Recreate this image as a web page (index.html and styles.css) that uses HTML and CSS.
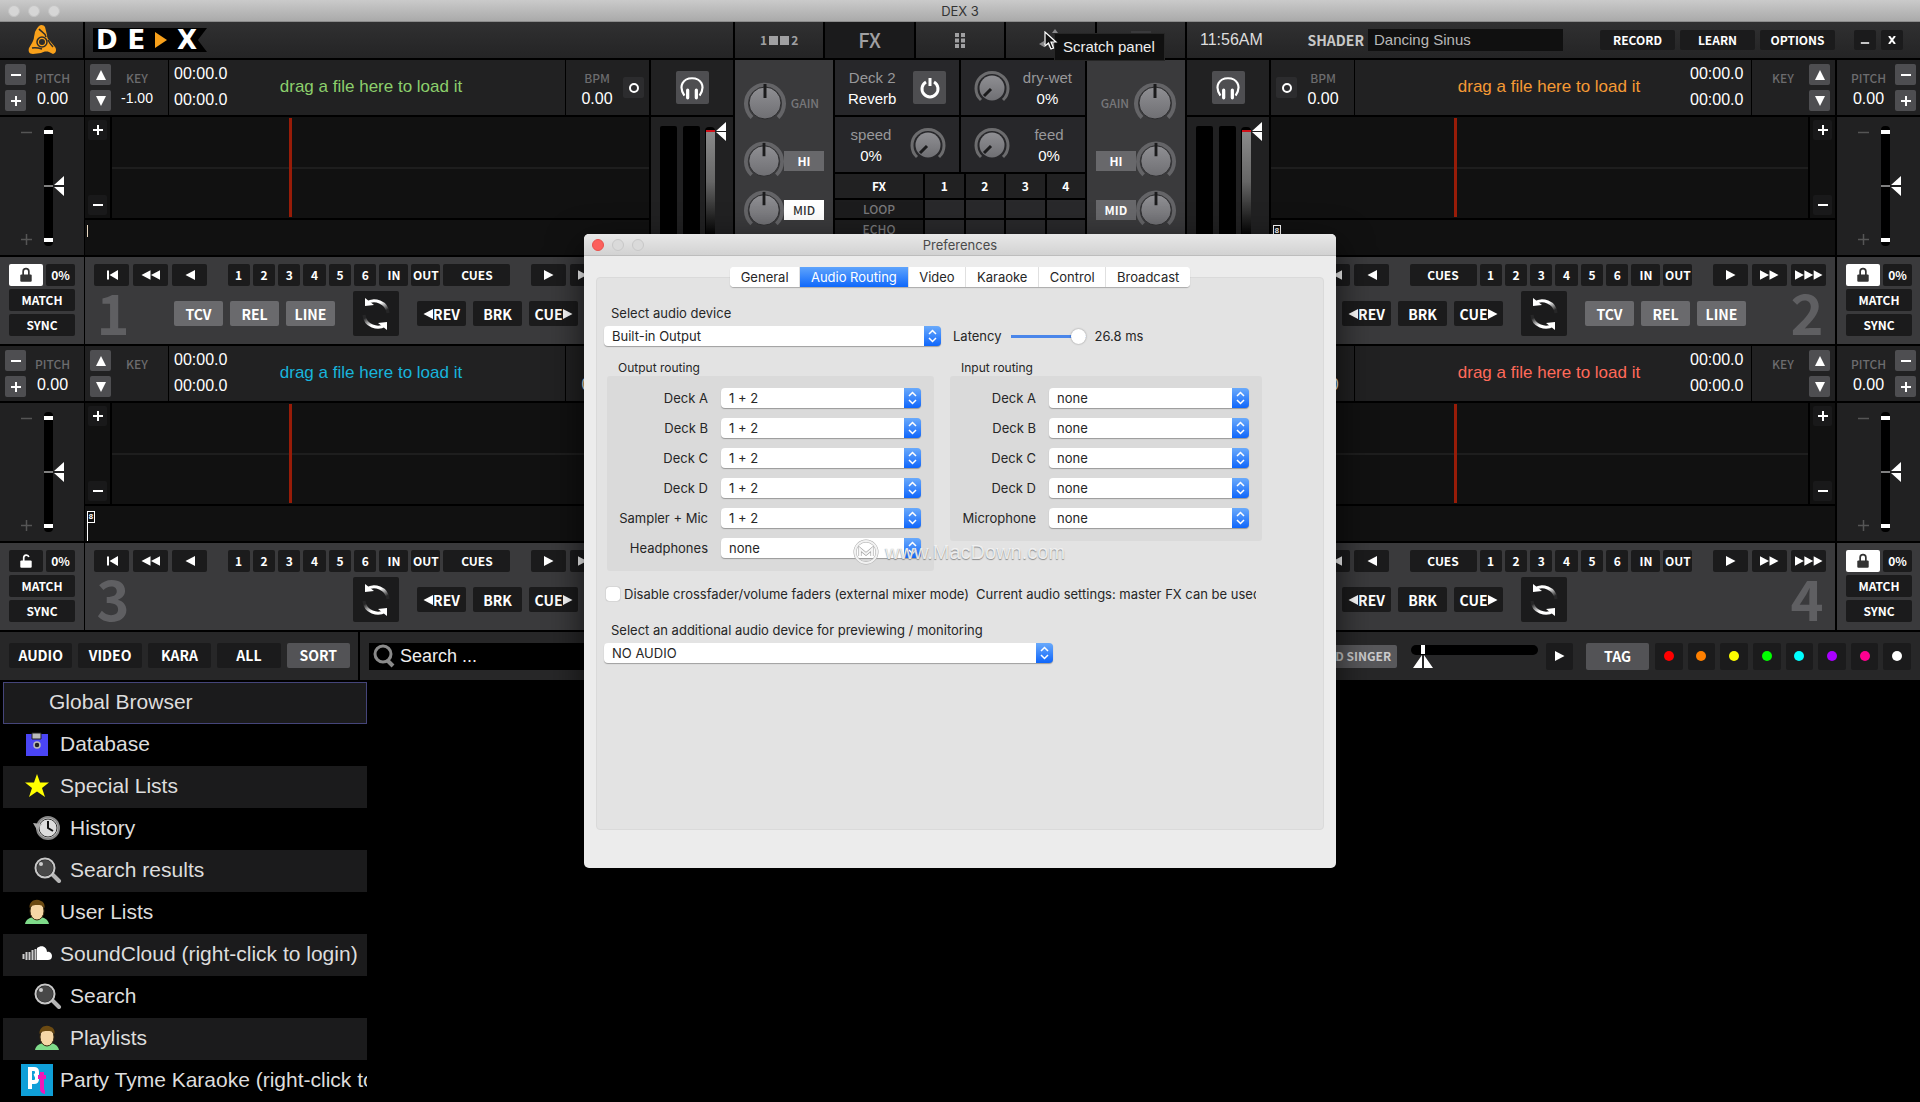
FILE: index.html
```html
<!DOCTYPE html>
<html lang="en">
<head>
<meta charset="utf-8">
<title>DEX 3</title>
<link rel="stylesheet" href="styles.css">
</head>
<body>
<svg class="defs" aria-hidden="true">
  <defs>
    <linearGradient id="metal" x1="0" y1="0" x2="0" y2="1"><stop offset="0" stop-color="#8f8f93"/><stop offset="1" stop-color="#6f6f73"/></linearGradient>
    <linearGradient id="fadeA" x1="0" y1="0" x2="1" y2="1"><stop offset="0" stop-color="#fff"/><stop offset=".4" stop-color="#fff"/><stop offset=".85" stop-color="#fff" stop-opacity=".05"/></linearGradient>
    <linearGradient id="fadeB" x1="1" y1="1" x2="0" y2="0"><stop offset="0" stop-color="#fff"/><stop offset=".4" stop-color="#fff"/><stop offset=".85" stop-color="#fff" stop-opacity=".05"/></linearGradient>
    <linearGradient id="volume" x1="0" y1="0" x2="0" y2="1"><stop offset="0" stop-color="#8a8a8a"/><stop offset=".45" stop-color="#666"/><stop offset=".95" stop-color="#000"/></linearGradient>
  </defs>
  <symbol id="minus" viewBox="0 0 12 12"><path d="M1 6h10" stroke="currentColor" stroke-width="2"/></symbol>
  <symbol id="plus" viewBox="0 0 12 12"><path d="M1 6h10M6 1v10" stroke="currentColor" stroke-width="2"/></symbol>
  <symbol id="up" viewBox="0 0 12 12"><path d="M6 1l5 10H1z" fill="currentColor"/></symbol>
  <symbol id="down" viewBox="0 0 12 12"><path d="M6 11l5-10H1z" fill="currentColor"/></symbol>
  <symbol id="prev" viewBox="0 0 12 12"><path d="M1 1.500h2v9H1zM12 1v10L3.500 6z" fill="currentColor"/></symbol>
  <symbol id="back" viewBox="0 0 10 12"><path d="M10 1v10L.5 6z" fill="currentColor"/></symbol>
  <symbol id="rew" viewBox="0 0 20 12"><path d="M10 1v10L.5 6zM20 1v10L10.500 6z" fill="currentColor"/></symbol>
  <symbol id="play" viewBox="0 0 10 12"><path d="M0 1v10l9.500-5z" fill="currentColor"/></symbol>
  <symbol id="fwd" viewBox="0 0 20 12"><path d="M0 1v10l9.500-5zM10 1v10l9.500-5z" fill="currentColor"/></symbol>
  <symbol id="fast" viewBox="0 0 30 12"><path d="M0 1v10l9.500-5zM10 1v10l9.500-5zM20 1v10l9.500-5z" fill="currentColor"/></symbol>
  <symbol id="locked" viewBox="0 0 12 14"><path d="M3.500 7V4a2.500 2.500 0 015 0v3" fill="none" stroke="currentColor" stroke-width="1.500"/><rect x="1" y="6.500" width="10" height="6.500" rx="1" fill="currentColor"/></symbol>
  <symbol id="unlocked" viewBox="0 0 12 14"><path d="M4 7V4a2.300 2.300 0 014.500-.5" fill="none" stroke="currentColor" stroke-width="1.500"/><rect x="1" y="6.500" width="10" height="6.500" rx="1" fill="currentColor"/></symbol>
  <symbol id="loop" viewBox="0 0 36 36"><path d="M9 7C16 2 29 6 30 17" fill="none" stroke="url(#fadeA)" stroke-width="3"/><path d="M7 2v8l9-1z" fill="#fff"/><path d="M27 29C20 34 7 30 6 19" fill="none" stroke="url(#fadeB)" stroke-width="3"/><path d="M29 34v-8l-9 1z" fill="#fff"/></symbol>
  <symbol id="phones" viewBox="0 0 24 24"><path d="M5 19C-1 10 4 3 12 3s13 7 7 16" fill="none" stroke="#fff" stroke-width="2"/><path d="M8 14v7M16 14v7" stroke="#fff" stroke-width="3" stroke-linecap="round"/></symbol>
  <symbol id="knob" viewBox="0 0 42 42"><path d="M8 35.500A19 19 0 1134 35.500" fill="none" stroke="#646467" stroke-width="4"/><circle cx="21" cy="21" r="16" fill="url(#metal)" stroke="#2c2c2e" stroke-width="1"/><path d="M21 2v14" stroke="#1b1b1c" stroke-width="3"/></symbol>
  <symbol id="dial" viewBox="0 0 36 36"><path d="M7 30A16 16 0 1129 30" fill="none" stroke="#6c6c6e" stroke-width="3"/><circle cx="18" cy="18" r="12.500" fill="url(#metal)"/><path d="M17 19l-7 7" stroke="#1b1b1c" stroke-width="3"/></symbol>
  <symbol id="pitch" viewBox="0 0 83 138"><rect x="44" y="9" width="9" height="120" rx="4" fill="#000"/><path d="M44 13h9v4h-9zM44 121h9v4h-9z" fill="#fff"/><path d="M44 69h9" stroke="#fff"/><path d="M64 59v9H54zM64 70v9l-10-9z" fill="#fff"/><path d="M21 15.500h11M21 122.500h11M26.500 117v11" stroke="#555" stroke-width="1.500"/></symbol>
  <symbol id="magnifier" viewBox="0 0 28 26"><path d="M18 16l8 8" stroke="#b5b5b5" stroke-width="4" stroke-linecap="round"/><circle cx="12" cy="11" r="9.500" fill="#222" stroke="#c8c8c8" stroke-width="2"/><circle cx="12" cy="11" r="8" fill="#484848"/><circle cx="8" cy="7" r="2" fill="#ccc"/></symbol>
  <symbol id="person" viewBox="0 0 26 26"><path d="M1 25c1-5 5-6 8-7h8c3 1 7 2 8 7z" fill="#7fdb8a"/><ellipse cx="13" cy="12" rx="7" ry="9" fill="#f6d7a6" stroke="#3a2a10" stroke-width="1"/><path d="M5.500 9C5 2 12-1 17 2c3 1 4 4 3.500 7-2-3-4-3-7-3-3 0-6 0-8 3z" fill="#6b4a12"/></symbol>
</svg>

<div class="window">
  <header class="titlebar"><span class="lights"><i></i><i></i><i></i></span><h1>DEX 3</h1></header>

  <div class="toolbar">
    <div class="brand">
      <div class="emblem">
        <svg width="32" height="32" viewBox="0 0 32 32" role="img" aria-label="PCDJ"><path d="M13 2c2-2 5-1 6 1l2 8c0 3 1 4 3 6l5 6c2 3 1 6-2 7l-4-2c-3-1-6 0-8 1l-8 1c-4 0-5-3-4-6l3-5c1-2 2-4 2-6l1-5c1-2 2-4 4-6z" fill="#f9a11b"/><circle cx="16" cy="18" r="5" fill="none" stroke="#2b2b2c" stroke-width="1.500"/><circle cx="16" cy="18" r="3" fill="#2b2b2c"/><path d="M13 5c2 3 6 3 7 8M6 24c4-1 7 0 10 1M27 23c-2-2-3-3-5-7" fill="none" stroke="#2b2b2c" stroke-width="1.500"/></svg>
      </div>
      <div class="wordmark"><span class="plate"><b>D</b><b>E</b><svg width="12" height="16" viewBox="0 0 12 16" aria-hidden="true"><path d="M0 0v16l12-8z" fill="#f9a11b"/></svg><b>X</b></span></div>
    </div>
    <nav class="panels">
      <button class="mix" aria-label="Mixer panel">1<i></i><i></i>2</button>
      <button class="on">FX</button>
      <button aria-label="Sampler panel"><svg width="10" height="15" viewBox="0 0 10 15"><path d="M0 0h4v4H0zM6 0h4v4H6zM0 5.500h4v4H0zM6 5.500h4v4H6zM0 11h4v4H0zM6 11h4v4H6z" fill="#a0a0a2"/></svg></button>
      <button class="scratch" aria-label="Scratch panel"><svg width="22" height="22" viewBox="0 0 22 22"><path d="M4 15h7M16 2v8" stroke="#8a8a8c" stroke-width="2"/><path d="M0 15l5-3v6zM16 0l3 4h-6z" fill="#8a8a8c"/><circle cx="14" cy="15" r="5" fill="#8a8a8c"/></svg></button>
      <button aria-label="Video panel"><svg width="20" height="18" viewBox="0 0 20 18"><path d="M0 0h20v18H0z" fill="#3a3a3c"/></svg></button>
      <svg class="cursor" width="14" height="20" viewBox="0 0 14 20" aria-hidden="true"><path d="M1 1v14l3.500-3 2.500 6 2.500-1L7 11h5z" fill="#111" stroke="#fff" stroke-width="1.200"/></svg>
      <span class="tooltip" role="tooltip">Scratch panel</span>
    </nav>
    <div class="tools">
      <time>11:56AM</time>
      <label class="shader">SHADER<input type="text" value="Dancing Sinus"></label>
      <div class="menu"><button>RECORD</button><button>LEARN</button><button>OPTIONS</button></div>
      <button class="small" aria-label="Minimize"><svg width="10" height="12"><use href="#minus" y="3"/></svg></button>
      <button class="small" aria-label="Close"><svg width="8" height="8" viewBox="0 0 8 8"><path d="M1 0l6 8M7 0L1 8" stroke="#fff" stroke-width="2"/></svg></button>
    </div>
  </div>

  <main class="console">
    <div class="stack" id="left"></div>
    <section class="meter" aria-label="Left volume"></section>
    <section class="mixer">
      <div class="eq">
        <div class="band gain"><svg width="42" height="42"><use href="#knob"/></svg><span>GAIN</span></div>
        <div class="band"><svg width="40" height="40"><use href="#knob"/></svg><button>HI</button></div>
        <div class="band"><svg width="40" height="40"><use href="#knob"/></svg><button class="lit">MID</button></div>
      </div>
      <div class="fx">
        <div class="units">
          <div class="unit"><p><span>Deck 2</span>Reverb</p><button class="power" aria-label="Effect on"><svg width="22" height="24" viewBox="0 0 22 24"><path d="M7 6a8 8 0 108 0" fill="none" stroke="#fff" stroke-width="3"/><path d="M11 2v8" stroke="#fff" stroke-width="3"/></svg></button></div>
          <div class="unit"><svg width="36" height="36"><use href="#dial"/></svg><p><span>dry-wet</span>0%</p></div>
          <div class="unit"><p><span>speed</span>0%</p><svg width="36" height="36"><use href="#dial"/></svg></div>
          <div class="unit"><svg width="36" height="36"><use href="#dial"/></svg><p><span>feed</span>0%</p></div>
        </div>
        <table class="slots">
          <thead><tr><th>FX</th><th>1</th><th>2</th><th>3</th><th>4</th></tr></thead>
          <tbody>
            <tr><th>LOOP</th><td></td><td></td><td></td><td></td></tr>
            <tr><th>ECHO</th><td></td><td></td><td></td><td></td></tr>
          </tbody>
        </table>
      </div>
      <div class="eq flip">
        <div class="band gain"><svg width="42" height="42"><use href="#knob"/></svg><span>GAIN</span></div>
        <div class="band"><svg width="40" height="40"><use href="#knob"/></svg><button>HI</button></div>
        <div class="band"><svg width="40" height="40"><use href="#knob"/></svg><button>MID</button></div>
      </div>
    </section>
    <section class="meter" aria-label="Right volume"></section>
    <div class="stack" id="right"></div>
  </main>

  <div class="bar">
    <div class="filters"><button>AUDIO</button><button>VIDEO</button><button>KARA</button><button>ALL</button><button class="on">SORT</button></div>
    <div class="finder">
      <label class="search"><svg width="22" height="24" viewBox="0 0 22 24"><circle cx="10" cy="10" r="8" fill="none" stroke="#8a8a8a" stroke-width="3"/><path d="M14 16l6 6" stroke="#8a8a8a" stroke-width="4"/></svg><input type="search" placeholder="Search ..." aria-label="Search"></label>
      <button class="singer">ADD SINGER</button>
      <div class="preview"><svg width="127" height="24" viewBox="0 0 127 24"><rect y="1" width="127" height="10" rx="5" fill="#000"/><path d="M10 1h4v9h-4zM11 11v13H2zM13 11v13h9z" fill="#fff"/></svg><input type="range" value="8" aria-label="Preview position"></div>
      <button class="play" aria-label="Preview"><svg width="10" height="12"><use href="#play"/></svg></button>
      <button class="tag on">TAG</button>
      <div class="tags">
        <button aria-label="Red"><i class="red"></i></button><button aria-label="Orange"><i class="orange"></i></button><button aria-label="Yellow"><i class="yellow"></i></button><button aria-label="Green"><i class="green"></i></button><button aria-label="Cyan"><i class="cyan"></i></button><button aria-label="Violet"><i class="violet"></i></button><button aria-label="Pink"><i class="pink"></i></button><button aria-label="White"><i class="white"></i></button>
      </div>
    </div>
  </div>

  <nav class="tree">
    <a class="root" href="#browser">Global Browser</a>
    <a href="#database"><svg height="24" viewBox="0 0 24 24"><path d="M1 2h22v22H1z" fill="#4a45f5"/><path d="M7 1h9v6H7z" fill="#bbb" stroke="#222"/><circle cx="12" cy="13" r="3" fill="#222" stroke="#bbb" stroke-width="1.500"/></svg>Database</a>
    <a href="#special"><svg height="24" viewBox="0 0 24 24"><path d="M12 0l3 8.500h9l-7 5.500 3 9-8-5.500L4 23l3-9-7-5.500h9z" fill="#ff0"/></svg>Special Lists</a>
    <a class="child" href="#history"><svg height="26" viewBox="0 0 28 26"><circle cx="15" cy="13" r="11" fill="#ddd" stroke="#888" stroke-width="2"/><circle cx="15" cy="13" r="9" fill="none" stroke="#333"/><path d="M15 6v7l5 3" fill="none" stroke="#111" stroke-width="2"/><path d="M0 8l9 1-5 6z" fill="#aaa"/></svg>History</a>
    <a class="child" href="#results"><svg height="26"><use href="#magnifier"/></svg>Search results</a>
    <a href="#users"><svg height="26"><use href="#person"/></svg>User Lists</a>
    <a href="#soundcloud"><svg height="16" viewBox="0 0 30 16"><path d="M15 2c5-4 10-1 10 4 3-1 5 2 5 4 0 3-2 4-4 4H15z" fill="#fff"/><path d="M1.500 8v5M4.500 6v8M7.500 6v8M10.500 4v10M13.500 3v11" stroke="#ccc" stroke-width="2"/></svg>SoundCloud (right-click to login)</a>
    <a class="child" href="#search"><svg height="26"><use href="#magnifier"/></svg>Search</a>
    <a class="child" href="#playlists"><svg height="26"><use href="#person"/></svg>Playlists</a>
    <a href="#party"><svg height="32" viewBox="0 0 32 32"><path d="M0 0h32v32H0z" fill="#0f9fd8"/><path d="M9 25V5h4c2 0 3 1 3 3v2l-1 1 1 2v2c0 2-1 3-3 3h-2" fill="none" stroke="#fff" stroke-width="4"/><path d="M21 8v17a3 3 0 003 3M17 13h8" fill="none" stroke="#f018b8" stroke-width="4"/></svg>Party Tyme Karaoke (right-click to login)</a>
  </nav>

  <div class="dialog" role="dialog" aria-labelledby="prefs">
    <header><span class="lights"><i></i><i></i><i></i></span><h2 id="prefs">Preferences</h2></header>
    <div class="body">
      <div class="tabs" role="tablist"><button>General</button><button class="on">Audio Routing</button><button>Video</button><button>Karaoke</button><button>Control</button><button>Broadcast</button></div>
      <div class="pane">
        <label class="title" for="device">Select audio device</label>
        <div class="device">
          <select id="device"><option>Built-in Output</option></select>
          <label for="latency">Latency</label><input id="latency" type="range" value="100"><output for="latency">26.8 ms</output>
        </div>
        <div class="routing">
          <fieldset class="out"><legend>Output routing</legend>
            <div class="grid">
              <label for="oa">Deck A</label><select id="oa"><option>1 + 2</option></select>
              <label for="ob">Deck B</label><select id="ob"><option>1 + 2</option></select>
              <label for="oc">Deck C</label><select id="oc"><option>1 + 2</option></select>
              <label for="od">Deck D</label><select id="od"><option>1 + 2</option></select>
              <label for="os">Sampler + Mic</label><select id="os"><option>1 + 2</option></select>
              <label for="oh">Headphones</label><select id="oh"><option>none</option></select>
            </div>
          </fieldset>
          <fieldset class="in"><legend>Input routing</legend>
            <div class="grid">
              <label for="ia">Deck A</label><select id="ia"><option>none</option></select>
              <label for="ib">Deck B</label><select id="ib"><option>none</option></select>
              <label for="ic">Deck C</label><select id="ic"><option>none</option></select>
              <label for="id">Deck D</label><select id="id"><option>none</option></select>
              <label for="im">Microphone</label><select id="im"><option>none</option></select>
            </div>
          </fieldset>
        </div>
        <div class="external"><input id="ext" type="checkbox"><label for="ext">Disable crossfader/volume faders (external mixer mode)</label><p>Current audio settings: master FX can be used</p></div>
        <label class="title" for="extra">Select an additional audio device for previewing / monitoring</label>
        <select id="extra"><option>NO AUDIO</option></select>
      </div>
    </div>
    <div class="watermark"><svg width="26" height="26" viewBox="0 0 26 26" aria-hidden="true"><circle cx="13" cy="13" r="11" fill="none" stroke="#aaa" stroke-width="3"/><circle cx="13" cy="13" r="11" fill="none" stroke="#f2f2f2" stroke-width="2"/><path d="M7 17v-7l6 5 6-5v7" fill="none" stroke="#999" stroke-width="3"/><path d="M7 17v-7l6 5 6-5v7" fill="none" stroke="#f5f5f5" stroke-width="2"/></svg>www.MacDown.com</div>
  </div>
</div>
<script src="script.js"></script>
</body>
</html>
```

FILE: styles.css
```css
* { box-sizing: border-box; }
body { margin: 0; background: #000; color: #fff; font: 16px/20px "Liberation Sans", Arial, sans-serif; }
h1, h2, p { margin: 0; font-weight: 400; }
button, input, select { font: inherit; color: inherit; margin: 0; border: 0; padding: 0; outline: 0; }
svg { display: block; flex: none; }
.defs { position: absolute; width: 0; height: 0; }

button {
  display: flex; align-items: center; justify-content: center;
  background: #1b1b1c; border-radius: 2px; overflow: hidden; white-space: nowrap;
  font: 700 12px/20px "Noto Sans CJK JP", sans-serif;
}
button.on { background: #535356; }

.window { position: relative; min-height: 100vh; overflow: hidden; display: flex; flex-direction: column; }

.titlebar { position: relative; height: 22px; display: flex; align-items: center; justify-content: center; background: linear-gradient(#cacaca, #aaa); border-bottom: 1px solid #8c8c8c; }
.titlebar h1 { font: 13px/20px Inter, sans-serif; color: #333; }
.lights { position: absolute; left: 8px; display: flex; gap: 8px; }
.lights i { width: 12px; height: 12px; border-radius: 50%; background: #d6d6d6; border: 1px solid #c4c4c4; }

/* Toolbar */
.toolbar { display: grid; grid-template-columns: 1fr 450px 1fr; gap: 2px; height: 36px; margin-bottom: 2px; }
.toolbar .emblem, .toolbar .wordmark, .tools, .panels button { background: linear-gradient(#303031, #242425); }
.brand { display: grid; grid-template-columns: 83px 1fr; gap: 2px; }
.emblem { display: grid; place-items: center; }
.wordmark { display: flex; align-items: center; padding-left: 8px; }
.plate { display: flex; align-items: center; justify-content: space-between; width: 114px; height: 24px; padding: 0 10px 0 3px; background: #000; clip-path: polygon(0 0, 100% 0, 92% 50%, 100% 100%, 0 100%); }
.plate b { font: 700 26px/24px "DejaVu Sans", sans-serif; }
.panels { position: relative; display: grid; grid-template-columns: repeat(5, 1fr); gap: 2px; }
.panels button { border-radius: 0; color: #a0a0a2; gap: 2px; }
.panels button.on { background: #1b1b1c; font-weight: 500; font-size: 20px; }
.panels .mix i { width: 9px; height: 9px; background: #a0a0a2; }
.cursor { position: absolute; left: 309px; top: 9px; z-index: 3; }
.tooltip { position: absolute; left: 319px; top: 11px; z-index: 2; padding: 3px 9px 3px 8px; background: #101010; border: 1px solid #262626; font-size: 15px; color: #eee; white-space: nowrap; }
.tools { display: flex; align-items: center; padding: 0 17px 0 13px; }
.tools time { color: #ddd; flex: 1; }
.shader { display: flex; align-items: center; gap: 4px; color: #c8c8c8; font: 700 14px/22px "Noto Sans CJK JP", sans-serif; }
.shader input { width: 195px; height: 22px; padding-left: 6px; background: #101010; color: #b8b8b8; font: 15px/22px "Liberation Sans", sans-serif; }
.menu { display: grid; grid-template-columns: repeat(3, 75px); gap: 5px; margin: 0 19px 0 37px; }
.tools button { height: 20px; }
.tools .small { width: 22px; }
.tools .small:last-child { margin-left: 5px; }

/* Console */
.console { display: grid; grid-template-columns: 1fr 82px 450px 82px 1fr; gap: 2px; margin-bottom: 2px; }
.stack { display: grid; gap: 2px; }
.deck { display: grid; grid-template-columns: 83px 1fr; gap: 2px; }
.flip .deck { grid-template-columns: 1fr 83px; }
.flip .deck .side { order: 2; }
.side, .main { display: grid; grid-template-rows: 55px 138px 87px; gap: 2px; }
.main { grid-template-rows: 55px 101px 35px 87px; }
.cell, .pitch { background: #212122; }
.cell { display: flex; align-items: center; padding: 0 5px; }
.flip .cell { flex-direction: row-reverse; }
.cell > .readout { flex: 1; text-align: center; line-height: 21px; }
.cell small { display: block; color: #6c6c6e; font: 500 12px/21px "Noto Sans CJK JP", sans-serif; }
.cell .value { min-height: 21px; }
.cell .minor { font-size: 14px; }
.steps { display: grid; gap: 5px; }
.steps button { width: 21px; height: 21px; background: #4e4e51; }
.head { display: grid; grid-template-columns: 83px 1fr 83px; gap: 1px; }
.flip .head { direction: rtl; }
.flip .head > * { direction: ltr; }
.bpm .steps button { background: #2c2c2e; }
.title { line-height: 20px; }
.load { display: flex; align-items: center; padding: 0 5px 2px; background: #212122; }
.flip .load { flex-direction: row-reverse; }
.load time { line-height: 26px; width: 56px; }
.load span { flex: 1; text-align: center; padding-right: 48px; font-size: 17px; }
.flip .load span { padding: 0 0 0 48px; }
.pitch { position: relative; }
.pitch input, .preview input { position: absolute; inset: 0; width: 100%; height: 100%; opacity: 0; }
.wave { display: grid; grid-template-columns: 25px 1fr; gap: 2px; }
.flip .wave { grid-template-columns: 1fr 25px; }
.flip .zoom { order: 2; }
.zoom { display: flex; flex-direction: column; justify-content: space-between; padding: 3px; background: #111; }
.zoom button { width: 19px; height: 20px; background: #19191a; }
.scope { position: relative; background: linear-gradient(#1e1e1e, #1e1e1e) 0 50% / 100% 2px no-repeat #111; }
.scope::after { content: ""; position: absolute; left: 33%; top: 1px; bottom: 1px; width: 3px; background: #981c08; }
.flip .scope::after { left: 34%; }
.overview { background: #111; padding: 5px 2px; }
.overview i { display: block; width: 1px; height: 12px; background: #e8d8c0; }
.overview .long { height: 30px; background: #fff; }
.overview .long b { display: block; width: 8px; height: 12px; border: 1px solid #fff; background: #111; font: 700 8px/10px "Liberation Mono", monospace; text-align: center; }

.sync, .controls { background: #3a3a3c; }
.sync { display: grid; grid-template-columns: 34px 29px; grid-auto-rows: 22px; gap: 3px; padding: 7px 9px; align-content: start; }
.sync button:nth-child(n + 3) { grid-column: 1 / 3; }
.sync .lit { background: #fff; color: #333; }
.controls { padding: 7px 5px 0 9px; }
.flip .controls { padding: 7px 9px 0 5px; }
.row { display: flex; justify-content: space-between; }
.transport { display: grid; grid-template-columns: repeat(3, 35px); gap: 4px; }
.cues { display: flex; gap: 3px; width: 283px; }
.row button { height: 22px; }
.cues button { flex: 1; }
.cues .in { flex: 0 0 29px; }
.cues .all { flex: 0 0 67px; }
.lower { display: flex; align-items: center; height: 45px; margin-top: 5px; }
.lower button { width: 49px; height: 25px; font-size: 14px; }
.lower .number { width: 38px; padding-bottom: 5px; text-align: center; color: #5f5f62; font: 700 56px/40px "Noto Sans CJK JP", sans-serif; }
.modes, .moves { display: flex; gap: 7px; }
.modes { width: 161px; }
.modes button { background: #6a6a6d; }
.lower .cycle { width: 46px; height: 45px; margin: 0 18px; }
.lower .number + .modes { margin-left: 42px; }
.flip .number { margin-left: auto; }
.flip .moves { margin-left: 66px; }

/* Volume meters */
.meter { display: grid; grid-template-rows: 55px 1fr; gap: 2px; }
.meter .cue, .meter .levels { background: #212122; display: grid; place-items: center; }
.meter button { width: 33px; height: 33px; background: #4e4e51; }
.meter .levels { place-items: start center; }

/* Mixer */
.mixer { display: grid; grid-template-columns: 98px 1fr 98px; gap: 2px; }
.eq { display: flex; flex-direction: column; background: #3a3a3c; padding: 23px 9px 0; gap: 9px; }
.band { display: flex; align-items: center; height: 40px; }
.band.gain { margin-bottom: 9px; }
.band span { margin: 0 auto; color: #77777a; font: 500 12px/20px "Noto Sans CJK JP", sans-serif; }
.band button { flex: 1; height: 20px; background: #68686b; border-radius: 0; }
.band .lit { background: #fff; color: #333; font-weight: 500; }
.eq.flip .band { flex-direction: row-reverse; }
.fx { display: flex; flex-direction: column; gap: 2px; }
.units { display: grid; grid-template-columns: 1fr 1fr; grid-auto-rows: 55px; gap: 2px; }
.unit { display: flex; align-items: center; justify-content: space-between; padding: 0 13px; background: #27272a; font-size: 15px; line-height: 21px; }
.unit p { min-width: 46px; text-align: center; }
.unit p span { display: block; color: #98989a; }
.power { width: 33px; height: 33px; background: #4e4e51; }
.slots { width: calc(100% + 4px); margin: -2px; border-collapse: separate; border-spacing: 2px; table-layout: fixed; }
.slots th, .slots td { padding: 0; background: #212122; font: 700 12px/18px "Noto Sans CJK JP", sans-serif; }
.slots thead th { line-height: 24px; }
.slots tr > :first-child { width: 88px; }
.slots tbody th { color: #78787a; font-weight: 500; background: #1c1c1d; }
.slots td { background: #29292b; }

/* Browser bar */
.bar { display: grid; grid-template-columns: 358px 1fr; gap: 2px; height: 48px; margin-bottom: 2px; }
.filters, .finder { background: #272728; display: flex; align-items: center; }
.filters { gap: 6px; padding: 0 8px 2px 9px; }
.filters button { flex: 1; height: 25px; }
.bar button { font-size: 14px; }
.finder { padding: 0 9px; }
.search { flex: 1; display: flex; align-items: center; gap: 5px; height: 27px; padding-left: 4px; background: #000; }
.search input { flex: 1; background: none; font-size: 18px; }
.search input::placeholder { color: #eee; opacity: 1; }
.bar .singer { width: 84px; height: 23px; margin: 0 14px 0 9px; background: #58585b; color: #ccc; font-size: 12px; }
.preview { position: relative; }
.bar .play { width: 27px; height: 27px; margin: 0 13px 0 8px; }
.bar .tag { width: 63px; height: 27px; margin-right: 6px; }
.tags { display: grid; grid-template-columns: repeat(8, 1fr); gap: 5px; width: 256px; }
.tags button { height: 27px; }
.tags i { width: 10px; height: 10px; border-radius: 50%; }
.red { background: #f00; } .orange { background: #ff8000; } .yellow { background: #ff0; } .green { background: #0f0; }
.cyan { background: #0ff; } .violet { background: #a0f; } .pink { background: #ff0090; } .white { background: #fff; }

/* Library tree */
.tree { width: 367px; padding-left: 3px; }
.tree a { display: flex; align-items: center; height: 42px; padding: 0 0 2px 18px; gap: 7px; overflow: hidden; white-space: nowrap; color: #ddd; font-size: 21px; line-height: 26px; text-decoration: none; }
.tree svg { width: 32px; }
.tree a:nth-child(odd) { background: #1b1b1c; }
.tree .root { padding-left: 45px; border: 1px solid #45457a; }
.tree .child { padding-left: 28px; }

/* Preferences dialog */
.dialog { position: absolute; left: 50%; top: 234px; width: 752px; transform: translateX(-50%); border-radius: 5px; background: #ececec; color: #262626; font: 13px/20px Inter, sans-serif; box-shadow: 0 12px 36px rgba(0, 0, 0, .7); z-index: 5; }
.dialog header { position: relative; display: flex; align-items: center; justify-content: center; height: 22px; border-radius: 5px 5px 0 0; border-bottom: 1px solid #bdbdbd; background: linear-gradient(#e8e8e8, #d2d2d2); }
.dialog h2 { font-size: 13px; line-height: 20px; color: #4a4a4a; }
.dialog .lights i { background: #dadada; border-color: #c8c8c8; }
.dialog .lights i:first-child { background: #fc605c; border-color: #e8504c; }
.body { padding: 11px 12px 38px; }
.tabs { display: flex; width: 460px; margin: 0 auto -10px; position: relative; border-radius: 4px; background: #fff; box-shadow: 0 1px 1px rgba(0, 0, 0, .25); overflow: hidden; }
.tabs button { flex: auto; height: 20px; border-radius: 0; background: #fff; font: 13px/20px Inter, sans-serif; }
.tabs button + button { border-left: 1px solid #e0e0e0; }
.tabs .on { background: linear-gradient(#5fa4fc, #0f68fb); color: #fff; }
.pane { height: 553px; padding: 25px 7px 0; border: 1px solid #dadada; border-radius: 4px; background: #e3e3e3; }
.pane .title { display: block; padding-left: 7px; margin-bottom: 3px; }
.dialog select {
  appearance: none; height: 20px; padding-left: 8px; border-radius: 4px; box-shadow: 0 1px 1px rgba(0, 0, 0, .3);
  background: url("data:image/svg+xml,%3Csvg xmlns='http://www.w3.org/2000/svg' width='17' height='20'%3E%3ClinearGradient id='g' x2='0' y2='1'%3E%3Cstop stop-color='%236aaafb'/%3E%3Cstop offset='1' stop-color='%230f66fb'/%3E%3C/linearGradient%3E%3Cpath d='M0 0h17v20H0z' fill='url(%23g)'/%3E%3Cpath d='M5 8l3.500-3.500L12 8M5 12l3.500 3.500L12 12' fill='none' stroke='%23fff' stroke-width='1.500'/%3E%3C/svg%3E") right / 17px 20px no-repeat #fff;
}
.device { display: flex; align-items: center; gap: 9px; }
#device { width: 337px; margin-right: 3px; }
#latency { appearance: none; width: 75px; height: 16px; background: linear-gradient(#4a86ea, #4a86ea) 0 50% / 100% 3px no-repeat; }
#latency::-webkit-slider-thumb { appearance: none; width: 15px; height: 15px; border-radius: 50%; background: #fff; box-shadow: 0 0 2px rgba(0, 0, 0, .4); }
.routing { display: flex; align-items: flex-start; gap: 16px; padding-left: 3px; margin-top: 13px; }
fieldset { border: 0; margin: 0; padding: 0; min-width: 0; }
legend { padding: 0 11px; font-size: 12px; line-height: 17px; }
.grid { display: grid; grid-template-columns: 101px 200px; gap: 10px 13px; padding: 12px 13px 13px 0; border-radius: 3px; background: #dadada; }
.in .grid { grid-template-columns: 86px 200px; }
.grid label { text-align: right; }
.external { display: flex; align-items: center; margin: 13px 0 16px 2px; }
.external input { appearance: none; width: 14px; height: 14px; margin-right: 4px; border-radius: 3px; background: #fff; box-shadow: 0 0 1px rgba(0, 0, 0, .5); }
.external label { width: 352px; white-space: nowrap; }
.external p { width: 280px; overflow: hidden; white-space: nowrap; }
#extra { width: 449px; }
.watermark { position: absolute; left: 269px; top: 305px; display: flex; align-items: center; gap: 6px; color: rgba(245, 245, 245, .9); font: 20px/26px "Liberation Sans", sans-serif; text-shadow: 0 1px 1px #8a8a8a; }
```

FILE: script.js
```js
const icon = (name, w = 12, h = 12) => `<svg width="${w}" height="${h}"><use href="#${name}"/></svg>`;
const btn = (content, label = "", cls = "") =>
  `<button${cls ? ` class="${cls}"` : ""}${label ? ` aria-label="${label}"` : ""}>${content}</button>`;

const decks = {
  left: [
    { n: 1, color: "#8ccf6c", key: "-1.00", modes: true, locked: true, marker: "<i></i>" },
    { n: 3, color: "#18b4dc", key: "", modes: false, locked: false, marker: '<i class="long"><b>8</b></i>' }
  ],
  right: [
    { n: 2, color: "#f59a35", key: "", modes: true, locked: true, marker: '<i class="long"><b>8</b></i>' },
    { n: 4, color: "#ff6a5a", key: "", modes: false, locked: true, marker: "" }
  ]
};

function deck(d, side) {
  const left = side === "left";
  const digits = [1, 2, 3, 4, 5, 6].map(i => btn(i)).join("") + btn("IN", "", "in") + btn("OUT", "", "in");
  const all = btn("CUES", "", "all");
  const number = `<span class="number">${d.n}</span>`;
  const modes = `<div class="modes">${d.modes ? btn("TCV") + btn("REL") + btn("LINE") : ""}</div>`;
  const cycle = btn(icon("loop", 36, 36), "Loop", "cycle");
  const moves = `<div class="moves">${btn(icon("back", 10, 14) + "REV")}${btn("BRK")}${btn("CUE" + icon("play", 10, 14))}</div>`;
  return `
  <section class="deck" aria-label="Deck ${d.n}">
    <div class="side">
      <div class="cell"><div class="steps">${btn(icon("minus"), "Pitch down")}${btn(icon("plus"), "Pitch up")}</div>
        <div class="readout"><small>PITCH</small><div class="value">0.00</div></div></div>
      <div class="pitch"><svg width="83" height="138"><use href="#pitch"/></svg><input type="range" aria-label="Pitch"></div>
      <div class="sync">${btn(icon(d.locked ? "locked" : "unlocked", 14, 16), "Key lock", d.locked ? "lit" : "")}${btn("0%")}${btn("MATCH")}${btn("SYNC")}</div>
    </div>
    <div class="main">
      <div class="head">
        <div class="cell"><div class="steps">${btn(icon("up"), "Key up")}${btn(icon("down"), "Key down")}</div>
          <div class="readout"><small>KEY</small><div class="value minor">${d.key}</div></div></div>
        <div class="load"><time>00:00.0<br>00:00.0</time><span style="color:${d.color}">drag a file here to load it</span></div>
        <div class="cell bpm"><div class="readout"><small>BPM</small><div class="value">0.00</div></div>
          <div class="steps">${btn('<svg width="12" height="12" viewBox="0 0 12 12"><circle cx="6" cy="6" r="4" fill="none" stroke="#fff" stroke-width="2"/></svg>', "Tap tempo")}</div></div>
      </div>
      <div class="wave"><div class="zoom">${btn(icon("plus"), "Zoom in")}${btn(icon("minus"), "Zoom out")}</div><div class="scope"></div></div>
      <div class="overview">${d.marker}</div>
      <div class="controls">
        <div class="row">
          <div class="transport">${btn(icon("prev"), "Start")}${btn(icon("rew", 19, 12), "Rewind")}${btn(icon("back", 10, 12), "Back")}</div>
          <div class="cues">${left ? digits + all : all + digits}</div>
          <div class="transport">${btn(icon("play", 10, 12), "Play")}${btn(icon("fwd", 19, 12), "Forward")}${btn(icon("fast", 28, 12), "Fast forward")}</div>
        </div>
        <div class="lower">${left ? number + modes + cycle + moves : moves + cycle + modes + number}</div>
      </div>
    </div>
  </section>`;
}

for (const side of ["left", "right"]) {
  const stack = document.getElementById(side);
  if (side === "right") stack.classList.add("flip");
  stack.innerHTML = decks[side].map(d => deck(d, side)).join("");
}

document.querySelectorAll(".meter").forEach(m => {
  m.innerHTML = `<div class="cue">${btn(icon("phones", 26, 26), "Headphones")}</div>
  <div class="levels"><svg width="82" height="230" viewBox="0 0 82 230">
    <rect x="9" y="9" width="17" height="216" rx="2"/><rect x="32" y="9" width="17" height="216" rx="2"/>
    <rect x="54" y="10" width="10" height="215" rx="4"/><rect x="55" y="15" width="9" height="110" fill="url(#volume)"/>
    <path d="M55 14h9" stroke="#d01018" stroke-width="2"/><path d="M75 5v9H65zM75 15v9l-10-9z" fill="#fff"/></svg></div>`;
});
```
